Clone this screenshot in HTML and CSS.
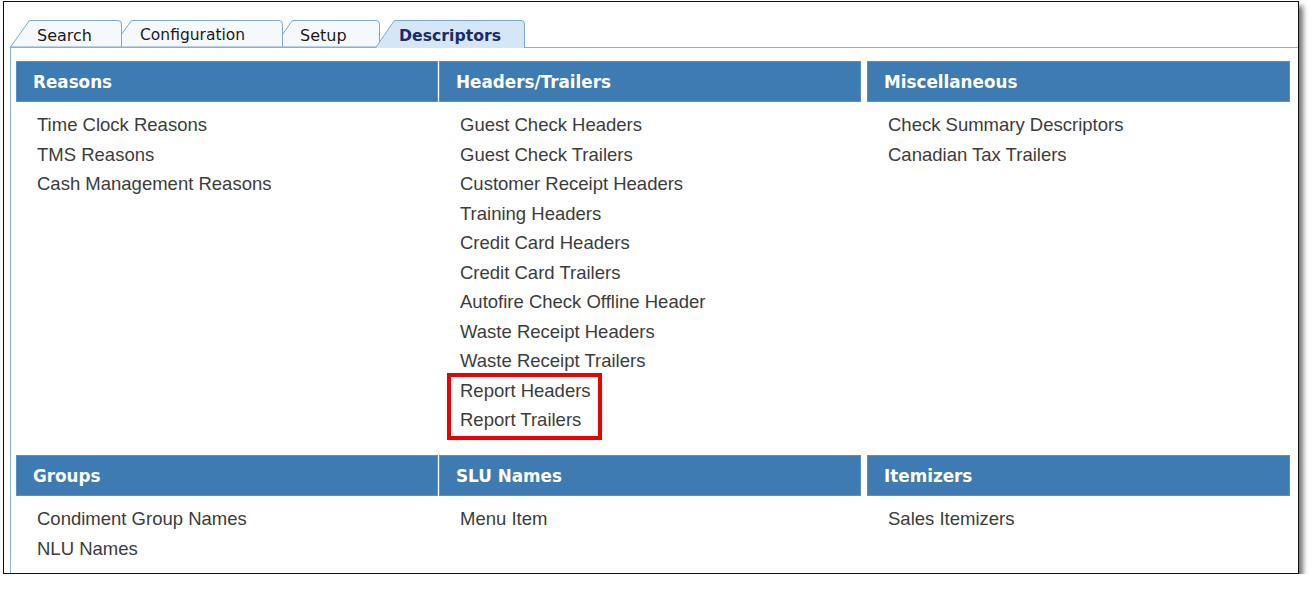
FILE: index.html
```html
<!doctype html>
<html>
  <head>
    <title>Descriptors</title>
    <link rel="stylesheet" href="styles.css">
  </head>
  <body>
    <div class="frame">
      <div class="tabs">
        <div class="tab tab-search">
          <svg class="tab-shape" width="112" height="27"><path d="M0.5 27 L19 1 Q19.8 0.5 21 0.5 H108 Q111.5 0.5 111.5 4 V27 Z"/></svg>
          <span class="tab-label">Search</span>
        </div>
        <div class="tab tab-config">
          <svg class="tab-shape" width="171" height="27"><path d="M0.5 27 L19 1 Q19.8 0.5 21 0.5 H167 Q170.5 0.5 170.5 4 V27 Z"/></svg>
          <span class="tab-label">Configuration</span>
        </div>
        <div class="tab tab-setup">
          <svg class="tab-shape" width="107" height="27"><path d="M0.5 27 L19 1 Q19.8 0.5 21 0.5 H103 Q106.5 0.5 106.5 4 V27 Z"/></svg>
          <span class="tab-label">Setup</span>
        </div>
        <div class="tab tab-active">
          <svg class="tab-shape" width="150" height="28"><path d="M0.5 28 L19 1 Q19.8 0.5 21 0.5 H146 Q149.5 0.5 149.5 4 V28"/></svg>
          <span class="tab-label">Descriptors</span>
        </div>
      </div>

      <div class="panel">
        <div class="row row-top">
          <div class="section">
            <div class="section-head">Reasons</div>
            <div class="section-body">
              <div class="item">Time Clock Reasons</div>
              <div class="item">TMS Reasons</div>
              <div class="item">Cash Management Reasons</div>
            </div>
          </div>
          <div class="section">
            <div class="section-head">Headers/Trailers</div>
            <div class="section-body">
              <div class="item">Guest Check Headers</div>
              <div class="item">Guest Check Trailers</div>
              <div class="item">Customer Receipt Headers</div>
              <div class="item">Training Headers</div>
              <div class="item">Credit Card Headers</div>
              <div class="item">Credit Card Trailers</div>
              <div class="item">Autofire Check Offline Header</div>
              <div class="item">Waste Receipt Headers</div>
              <div class="item">Waste Receipt Trailers</div>
              <div class="highlight">
                <div class="item">Report Headers</div>
                <div class="item">Report Trailers</div>
              </div>
            </div>
          </div>
          <div class="section section-last">
            <div class="section-head">Miscellaneous</div>
            <div class="section-body">
              <div class="item">Check Summary Descriptors</div>
              <div class="item">Canadian Tax Trailers</div>
            </div>
          </div>
        </div>

        <div class="row">
          <div class="section">
            <div class="section-head">Groups</div>
            <div class="section-body">
              <div class="item">Condiment Group Names</div>
              <div class="item">NLU Names</div>
            </div>
          </div>
          <div class="section">
            <div class="section-head">SLU Names</div>
            <div class="section-body">
              <div class="item">Menu Item</div>
            </div>
          </div>
          <div class="section section-last">
            <div class="section-head">Itemizers</div>
            <div class="section-body">
              <div class="item">Sales Itemizers</div>
            </div>
          </div>
        </div>
      </div>
    </div>
  </body>
</html>
```

FILE: styles.css
```css
html, body {
  margin: 0;
  background: #fff;
}
.frame {
  box-sizing: border-box;
  width: 1296px;
  height: 573px;
  margin: 1px 0 0 3px;
  padding: 18px 0 0 6px;
  border: 1px solid #111;
  box-shadow: 4px 5px 5px rgba(0, 0, 0, 0.55);
  overflow: hidden;
  background: #fff;
}
.tabs {
  display: flex;
  height: 27px;
}
.tab {
  position: relative;
  height: 27px;
  box-sizing: border-box;
  padding: 2px 0 0 27px;
  font-family: "DejaVu Sans", Verdana, sans-serif;
  font-size: 16px;
  line-height: 27px;
  color: #1a1a1a;
}
.tab-shape {
  position: absolute;
  left: 0;
  top: 0;
}
.tab-shape path {
  fill: #f5f9fd;
  stroke: #7ea8cf;
  stroke-width: 1;
}
.tab-label {
  position: relative;
}
.tab-search {
  width: 112px;
  z-index: 3;
}
.tab-config {
  width: 171px;
  margin-left: -10px;
  padding-left: 28px;
  font-size: 15.5px;
  z-index: 2;
}
.tab-setup {
  width: 107px;
  margin-left: -10px;
  z-index: 1;
}
.tab-active {
  width: 150px;
  height: 28px;
  margin-left: -5px;
  padding-left: 24px;
  z-index: 4;
  font-weight: bold;
  font-size: 15.7px;
  color: #1c2a6b;
}
.tab-active .tab-shape path {
  fill: #d5e7f7;
}
.panel {
  border-top: 1px solid #88b0d6;
  border-left: 1px solid #88b0d6;
  padding: 13px 0 0 5px;
  height: 540px;
}
.row {
  display: flex;
}
.row-top {
  height: 394px;
}
.section {
  width: 422px;
  margin-right: 1px;
}
.section-last {
  width: 423px;
  margin-left: 5px;
}
.section-head {
  box-sizing: border-box;
  height: 41px;
  padding: 1px 0 0 16px;
  background: #3e7bb3;
  border: 1px solid #5d90c2;
  font-family: "DejaVu Sans", Verdana, sans-serif;
  font-weight: bold;
  font-size: 16.8px;
  line-height: 38px;
  color: #fff;
}
.section-body {
  padding-top: 8px;
}
.item {
  padding-left: 21px;
  font-family: "Liberation Sans", Arial, sans-serif;
  font-size: 18.5px;
  line-height: 29.5px;
  color: #3d3d3d;
}
.highlight {
  position: relative;
}
.highlight::after {
  content: "";
  position: absolute;
  left: 8px;
  top: -3px;
  width: 155px;
  height: 67px;
  box-sizing: border-box;
  border: 4px solid #ee0000;
}
```
